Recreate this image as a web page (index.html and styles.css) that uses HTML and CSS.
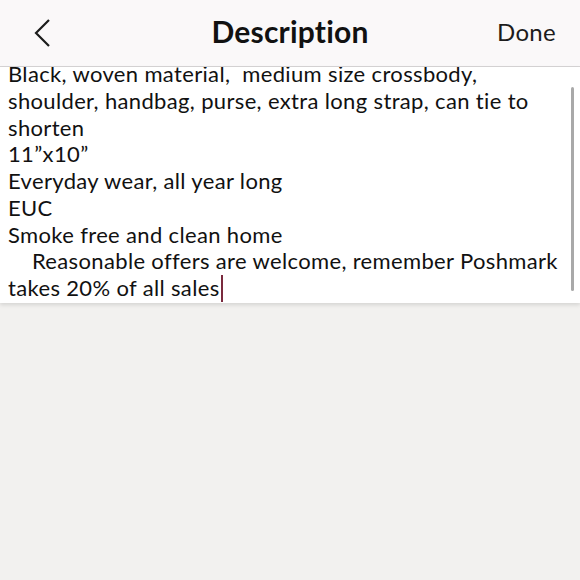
FILE: index.html
```html
<!DOCTYPE html>
<html lang="en">
  <head>
    <meta charset="UTF-8" />
    <meta name="viewport" content="width=device-width, initial-scale=1.0" />
    <title>Description</title>
    <link rel="stylesheet" href="styles.css">
  </head>
  <body>
    <header class="nav">
      <button class="back" aria-label="Back">
        <svg width="20" height="30" viewBox="0 0 20 30">
          <polyline points="16,2 3,15 16,28" fill="none" stroke="#1c1c1c" stroke-width="2.2" />
        </svg>
      </button>
      <h1>Description</h1>
      <button class="done">Done</button>
    </header>
    <div class="editor">
      <div class="text">
        <div>Black, woven material,&nbsp; medium size crossbody, shoulder, handbag, purse, extra long strap, can tie to shorten</div>
        <div>11”x10”</div>
        <div>Everyday wear, all year long</div>
        <div>EUC</div>
        <div>Smoke free and clean home</div>
        <div>&nbsp;&nbsp;&nbsp; Reasonable offers are welcome, remember Poshmark takes 20% of all sales<span class="caret"></span></div>
      </div>
      <div class="scrollbar"></div>
    </div>
  </body>
</html>
```

FILE: styles.css
```css
html,
body {
  margin: 0;
  padding: 0;
}
body {
  width: 580px;
  height: 580px;
  background-color: #f2f1ef;
  font-family: Lato, "Liberation Sans", sans-serif;
  color: #111;
  overflow: hidden;
}
.nav {
  height: 62px;
  display: flex;
  align-items: center;
  justify-content: space-between;
  background-color: #faf8f9;
  border-bottom: 1px solid #d6d4d5;
  padding: 0 24px 4px 33px;
  position: relative;
}
.nav h1 {
  position: absolute;
  left: 0;
  right: 0;
  top: 0;
  bottom: 4px;
  display: flex;
  align-items: center;
  justify-content: center;
  margin: 0;
  font-size: 30px;
  font-weight: bold;
  letter-spacing: 0.2px;
  pointer-events: none;
}
button {
  background: none;
  border: none;
  padding: 0;
  font-family: inherit;
  color: #1c1c1c;
}
.back {
  display: flex;
  height: 30px;
  margin-top: 4px;
}
.done {
  font-size: 24px;
  letter-spacing: 0.3px;
}
.editor {
  position: relative;
  height: 236px;
  background-color: #fff;
  overflow: hidden;
  box-shadow: 0 2px 4px rgba(0, 0, 0, 0.12);
}
.text {
  margin-top: -6px;
  padding: 0 12px 0 8px;
  font-size: 22px;
  line-height: 26.75px;
  letter-spacing: 0.35px;
}
.caret {
  display: inline-block;
  width: 2px;
  height: 27px;
  margin-left: 1px;
  vertical-align: -6px;
  background-color: #7a2a3e;
}
.scrollbar {
  position: absolute;
  right: 6px;
  top: 20px;
  width: 3px;
  height: 204px;
  border-radius: 2px;
  background-color: #a9a9a9;
}
```
